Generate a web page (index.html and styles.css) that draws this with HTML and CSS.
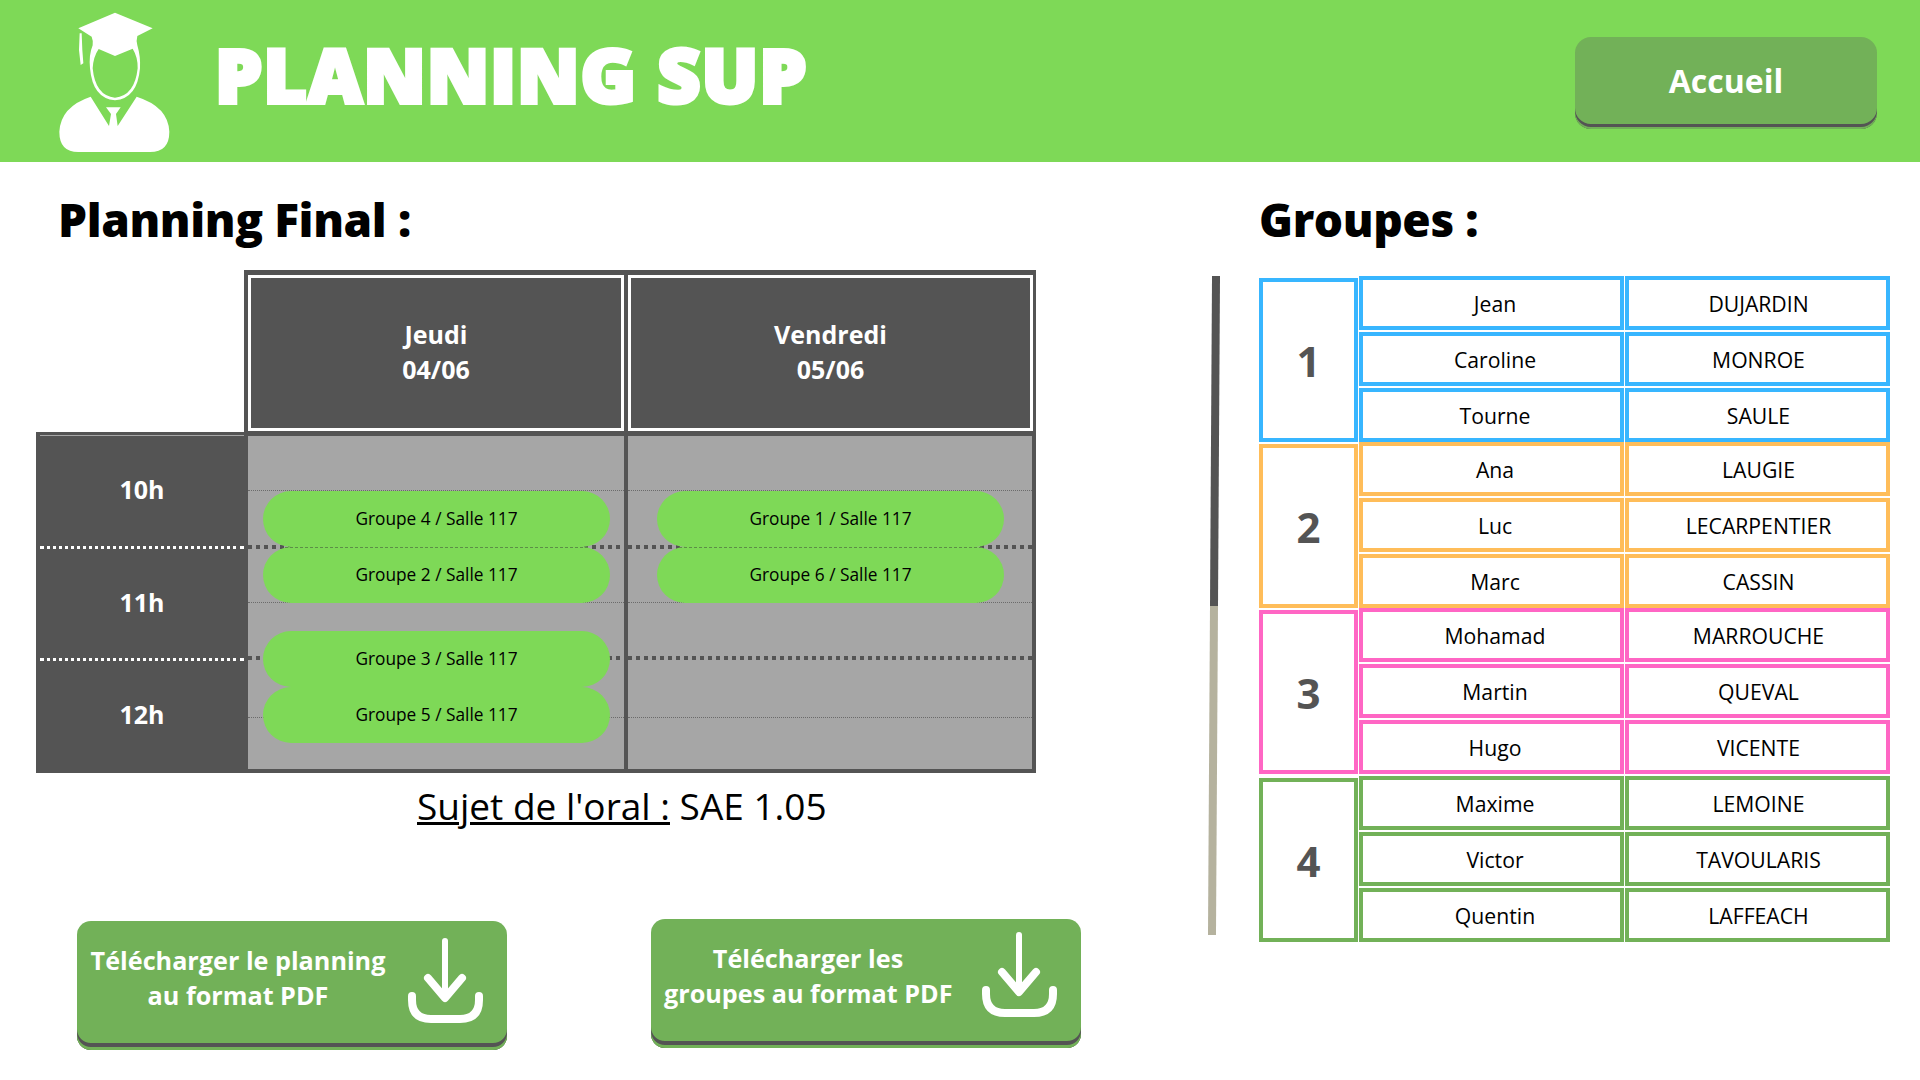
FILE: index.html
```html
<!DOCTYPE html>
<html lang="fr">
<head>
    <meta charset="UTF-8">
    <meta name="viewport" content="width=device-width, initial-scale=1.0">
    <title>Planning Sup</title>
    <link rel="stylesheet" href="styles.css">
</head>
<body>
    <header class="top-bar">
        <svg class="logo" viewBox="0 0 450 486" aria-hidden="true">
            <path fill="#fff" fill-rule="evenodd" d="M225 38 L338 85 L292 108 Q288 122 292 136 Q302 170 300 205 Q292 296 225 301 Q158 296 150 205 Q146 165 158 136 Q160 122 155 110 L115 85 Z M176 147 Q160 170 158 205 Q166 288 225 293 Q284 288 293 205 Q294 172 278 146 L225 168 Z"/>
            <path fill="#fff" d="M119 100 L125 100 L127 150 L130 190 L122 195 L117 150 Z"/>
            <path fill="#fff" d="M152 290 L207 378 L213 342 L198 322 L242 322 L228 342 L233 378 L290 290 Q385 320 388 395 Q388 456 330 456 L115 456 Q58 456 58 395 Q62 320 152 290 Z"/>
        </svg>
        <h1 class="brand">PLANNING SUP</h1>
        <a class="home-btn">Accueil</a>
    </header>

    <main class="page">
        <section class="planning">
            <h2 class="section-title">Planning Final :</h2>

            <div class="schedule">
                <div class="days">
                    <div class="day day-one">Jeudi<br>04/06</div>
                    <div class="day day-two">Vendredi<br>05/06</div>
                </div>
                <div class="slots">
                    <div class="hours">
                        <div class="hour">10h</div>
                        <div class="hour">11h</div>
                        <div class="hour">12h</div>
                    </div>
                    <div class="col col-one">
                        <span class="line thin l1"></span>
                        <span class="line thick l2"></span>
                        <span class="line thin l3"></span>
                        <span class="line thick l4"></span>
                        <span class="line thin l5"></span>
                        <div class="pill">Groupe 4 / Salle 117</div>
                        <div class="pill pill-seam">Groupe 2 / Salle 117</div>
                        <div class="pill pill-later">Groupe 3 / Salle 117</div>
                        <div class="pill">Groupe 5 / Salle 117</div>
                    </div>
                    <div class="col col-two">
                        <span class="line thin l1"></span>
                        <span class="line thick l2"></span>
                        <span class="line thin l3"></span>
                        <span class="line thick l4"></span>
                        <span class="line thin l5"></span>
                        <div class="pill">Groupe 1 / Salle 117</div>
                        <div class="pill pill-seam">Groupe 6 / Salle 117</div>
                    </div>
                </div>
            </div>

            <p class="subject"><u>Sujet de l'oral :</u> SAE 1.05</p>

            <div class="downloads">
                <a class="dl-btn dl-planning">
                    <span class="dl-text">Télécharger le planning<br>au format PDF</span>
                    <svg class="dl-icon" viewBox="0 0 75 85" aria-hidden="true">
                        <path d="M37 3 V58" stroke-width="6"/>
                        <path d="M20 40 L37 60 L54 40" stroke-width="8"/>
                        <path d="M4 58 V62 Q4 81 23 81 H52 Q71 81 71 62 V58" stroke-width="8"/>
                    </svg>
                </a>
                <a class="dl-btn dl-groups">
                    <span class="dl-text">Télécharger les<br>groupes au format PDF</span>
                    <svg class="dl-icon" viewBox="0 0 75 85" aria-hidden="true">
                        <path d="M37 3 V58" stroke-width="6"/>
                        <path d="M20 40 L37 60 L54 40" stroke-width="8"/>
                        <path d="M4 58 V62 Q4 81 23 81 H52 Q71 81 71 62 V58" stroke-width="8"/>
                    </svg>
                </a>
            </div>
        </section>

        <div class="divider"></div>

        <section class="groups">
            <h2 class="section-title">Groupes :</h2>

            <div class="group-list">
                <div class="group blue">
                    <div class="group-num">1</div>
                    <div class="members">
                        <div class="cell">Jean</div><div class="cell">DUJARDIN</div>
                        <div class="cell">Caroline</div><div class="cell">MONROE</div>
                        <div class="cell">Tourne</div><div class="cell">SAULE</div>
                    </div>
                </div>
                <div class="group orange">
                    <div class="group-num">2</div>
                    <div class="members">
                        <div class="cell">Ana</div><div class="cell">LAUGIE</div>
                        <div class="cell">Luc</div><div class="cell">LECARPENTIER</div>
                        <div class="cell">Marc</div><div class="cell">CASSIN</div>
                    </div>
                </div>
                <div class="group pink">
                    <div class="group-num">3</div>
                    <div class="members">
                        <div class="cell">Mohamad</div><div class="cell">MARROUCHE</div>
                        <div class="cell">Martin</div><div class="cell">QUEVAL</div>
                        <div class="cell">Hugo</div><div class="cell">VICENTE</div>
                    </div>
                </div>
                <div class="group green">
                    <div class="group-num">4</div>
                    <div class="members">
                        <div class="cell">Maxime</div><div class="cell">LEMOINE</div>
                        <div class="cell">Victor</div><div class="cell">TAVOULARIS</div>
                        <div class="cell">Quentin</div><div class="cell">LAFFEACH</div>
                    </div>
                </div>
            </div>
        </section>
    </main>
</body>
</html>
```

FILE: styles.css
```css
* {
    box-sizing: border-box;
}
body {
    margin: 0;
    height: 1080px;
    overflow: hidden;
    background-color: #fff;
    font-family: "Open Sans", sans-serif;
    color: #000;
}

/* top bar */
.top-bar {
    display: flex;
    align-items: center;
    height: 162px;
    padding: 0 43px 0 40px;
    background-color: #7ed957;
}
.logo {
    width: 150px;
    height: 162px;
    flex: none;
}
.brand {
    margin: 0 0 14px 25px;
    font-size: 75px;
    line-height: 90px;
    font-weight: 800;
    color: #fff;
    -webkit-text-stroke: 4px #fff;
    letter-spacing: 0.9px;
    white-space: nowrap;
}
.home-btn {
    display: flex;
    align-items: center;
    justify-content: center;
    width: 302px;
    height: 92px;
    margin: 4px 0 0 auto;
    padding-bottom: 6px;
    border-radius: 16px;
    background-color: #72b158;
    box-shadow: inset 0 -2px 0 #72b158, inset 0 -5px 0 #545454;
    color: #fff;
    font-size: 32px;
    font-weight: 700;
}

/* page columns */
.page {
    display: flex;
    padding-top: 27px;
}
.planning {
    width: 1208px;
    flex: none;
}
.section-title {
    margin: 0;
    font-size: 46px;
    line-height: 60px;
    font-weight: 800;
    letter-spacing: -0.4px;
}
.planning .section-title {
    margin-left: 58px;
}
.groups .section-title {
    margin-left: -1px;
}

/* schedule */
.schedule {
    width: 1000px;
    margin: 21px 0 0 36px;
}
.days {
    display: flex;
    gap: 4px;
    height: 162px;
    margin-left: 208px;
    padding: 5px 3px 1px 4px;
    background-color: #545454;
}
.day {
    display: flex;
    align-items: center;
    justify-content: center;
    padding-bottom: 2px;
    text-align: center;
    border: 3px solid #fff;
    color: #fff;
    font-size: 25px;
    line-height: 35px;
    font-weight: 700;
}
.day-one {
    width: 376px;
}
.day-two {
    width: 405px;
}
.slots {
    display: flex;
    gap: 4px;
    height: 341px;
    padding: 4px 4px 4px 0;
    background-color: #545454;
}
.hours {
    display: flex;
    flex-direction: column;
    width: 212px;
    margin-right: -4px;
    flex: none;
}
.hour {
    display: flex;
    align-items: center;
    justify-content: center;
    flex: 1;
    margin: 0 4px;
    padding-bottom: 4px;
    color: #fff;
    font-size: 25px;
    font-weight: 700;
}
.hour:first-child {
    border-top: 1px solid #a6a6a6;
    margin-top: -1px;
}
.hour:not(:last-child) {
    border-bottom: 3px dotted #fff;
}
.hour:last-child {
    padding-bottom: 2px;
}
.col {
    position: relative;
    padding-top: 55px;
    background-color: #a6a6a6;
}
.col-one {
    width: 376px;
    padding-left: 15px;
}
.col-two {
    width: 404px;
    padding-left: 29px;
}
.line {
    position: absolute;
    left: 0;
    right: 0;
}
.thin {
    border-top: 1px dotted #6b6b6b;
}
.thick {
    height: 4px;
    background-image: repeating-linear-gradient(90deg, #545454 0 4px, transparent 4px 8px);
}
.l1 {
    top: 54px;
}
.l2 {
    top: 109px;
}
.l3 {
    top: 166px;
}
.l4 {
    top: 220px;
}
.l5 {
    top: 281px;
}
.pill {
    position: relative;
    display: flex;
    align-items: center;
    justify-content: center;
    width: 347px;
    height: 56px;
    padding-bottom: 2px;
    border-radius: 28px;
    background-color: #7ed957;
    font-size: 17.3px;
}
.pill-seam::before {
    content: "";
    position: absolute;
    top: 0;
    left: 22px;
    right: 22px;
    border-top: 1px dashed #5c8f47;
}
.pill-later {
    margin-top: 28px;
}

/* subject + download buttons */
.subject {
    margin: 8px 0 0 417px;
    font-size: 37px;
    line-height: 50px;
    white-space: nowrap;
}
.downloads {
    display: flex;
    gap: 144px;
    margin: 90px 0 0 77px;
}
.dl-btn {
    display: flex;
    width: 430px;
    height: 129px;
    padding-left: 13px;
    border-radius: 14px;
    background-color: #72b158;
    box-shadow: inset 0 -3px 0 #72b158, inset 0 -7px 0 #545454;
    color: #fff;
}
.dl-groups {
    margin-top: -2px;
}
.dl-text {
    width: 296px;
    flex: none;
    padding-top: 22px;
    text-align: center;
    font-size: 25.2px;
    line-height: 35px;
    font-weight: 700;
    white-space: nowrap;
}
.dl-groups .dl-text {
    padding-top: 22px;
    padding-right: 8px;
}
.dl-icon {
    width: 75px;
    height: 85px;
    margin: 17px 0 0 22px;
    fill: none;
    stroke: #fff;
    stroke-linecap: round;
    stroke-linejoin: round;
}
.dl-groups .dl-icon {
    margin-top: 13px;
}

/* separator */
.divider {
    width: 8px;
    height: 659px;
    margin: 87px 0 0 2px;
    flex: none;
    background: linear-gradient(#545454 0 330px, #b5b29e 330px);
    transform: rotate(0.35deg);
}

/* groups table */
.groups {
    margin-left: 42px;
}
.group-list {
    margin: 27px 0 0 -1px;
}
.group {
    display: flex;
    width: 631px;
    gap: 1px;
}
.group.green {
    margin-top: 2px;
}
.group-num {
    display: flex;
    align-items: center;
    justify-content: center;
    align-self: flex-end;
    width: 100px;
    height: 164px;
    border: 4px solid;
    color: #545454;
    font-size: 42px;
    font-weight: 700;
}
.members {
    display: grid;
    grid-template-columns: 265px 265px;
    grid-auto-rows: 54px;
    gap: 2px 1px;
}
.cell {
    display: flex;
    align-items: center;
    justify-content: center;
    border: 4px solid;
    font-size: 21.2px;
}
.cell:nth-child(odd) {
    padding-left: 7px;
}
.cell:nth-child(even) {
    padding-left: 2px;
}
.blue .group-num, .blue .cell {
    border-color: #38b6ff;
}
.orange .group-num, .orange .cell {
    border-color: #ffbd59;
}
.pink .group-num, .pink .cell {
    border-color: #ff66c4;
}
.green .group-num, .green .cell {
    border-color: #72b158;
}
```
